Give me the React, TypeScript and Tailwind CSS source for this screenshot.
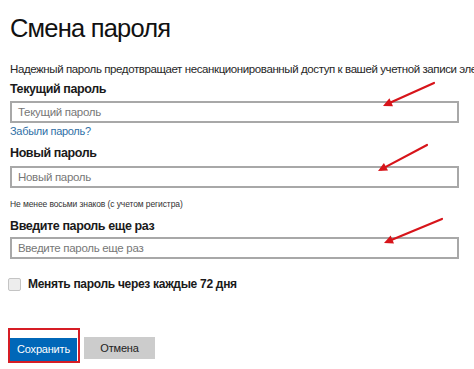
import React from 'react';

const font = { fontFamily: '"Liberation Sans", Arial, sans-serif' };

function Arrow({ x1, y1, x2, y2 }: { x1: number; y1: number; x2: number; y2: number }) {
  const ang = Math.atan2(y2 - y1, x2 - x1);
  const len = 10;
  const spread = 0.45;
  const ax = x2 - len * Math.cos(ang - spread);
  const ay = y2 - len * Math.sin(ang - spread);
  const bx = x2 - len * Math.cos(ang + spread);
  const by = y2 - len * Math.sin(ang + spread);
  return (
    <g>
      <line
        x1={x1}
        y1={y1}
        x2={x2 - 4 * Math.cos(ang)}
        y2={y2 - 4 * Math.sin(ang)}
        stroke="#d7141a"
        strokeWidth={2.2}
        strokeLinecap="round"
      />
      <polygon points={`${x2},${y2} ${ax},${ay} ${bx},${by}`} fill="#d7141a" />
    </g>
  );
}

const label = 'h-[16px] text-[12.5px] font-bold leading-[16px] tracking-[-0.4px] text-[#1a1a1a]';
const input =
  'h-[22px] w-[449px] border-2 border-[#a8a8a8] bg-white px-[6px] text-[11.5px] leading-[18px] tracking-[-0.3px] text-[#777]';

export default function App() {
  return (
    <div className="relative h-[369px] w-[474px] overflow-hidden bg-white" style={font}>
      <div className="px-[10px] pt-[11px]">
        <h1 className="h-[34px] text-[25.5px] font-normal leading-[34px] tracking-[-0.8px] text-[#111]">
          Смена пароля
        </h1>
        <p className="mt-[16px] h-[16px] whitespace-nowrap text-[11.5px] leading-[16px] tracking-[-0.4px] text-[#262626]">
          Надежный пароль предотвращает несанкционированный доступ к вашей учетной записи электронной почты.
        </p>

        <div className={`mt-[4px] ${label}`}>Текущий пароль</div>
        <div className={`mt-[4px] ${input}`}>Текущий пароль</div>
        <a className="block h-[16px] text-[11px] leading-[16px] tracking-[-0.3px] text-[#2f6fa6]">Забыли пароль?</a>

        <div className={`mt-[6px] ${label}`}>Новый пароль</div>
        <div className={`mt-[5px] ${input}`}>Новый пароль</div>
        <div className="mt-[10px] h-[12px] text-[8.5px] leading-[12px] tracking-[-0.1px] text-[#333]">
          Не менее восьми знаков (с учетом регистра)
        </div>

        <div className={`mt-[8px] ${label}`}>Введите пароль еще раз</div>
        <div className={`mt-[3px] ${input}`}>Введите пароль еще раз</div>

        <label className="mt-[17px] flex h-[16px] items-center gap-[7px]">
          <span className="-ml-[2px] block h-[13px] w-[13px] rounded-[2px] border border-[#c4c4c4] bg-[#ededed]" />
          <span className="text-[12px] font-bold leading-[16px] tracking-[-0.3px] text-[#1a1a1a]">
            Менять пароль через каждые 72 дня
          </span>
        </label>

        <div className="mt-[36px] flex items-start gap-[4px]">
          <div className="-ml-[2px] h-[35px] w-[72px] border-2 border-[#d61d25] pt-[8px]">
            <button className="block h-[23px] w-[67px] bg-[#0067b8] text-[11px] leading-[23px] tracking-[-0.2px] text-white">
              Сохранить
            </button>
          </div>
          <button className="mt-[9px] block h-[22px] w-[71px] bg-[#cccccc] text-[11px] leading-[22px] tracking-[-0.2px] text-[#222]">
            Отмена
          </button>
        </div>
      </div>
      <svg className="pointer-events-none absolute left-0 top-0" width={474} height={369}>
        <Arrow x1={434} y1={83} x2={383} y2={106} />
        <Arrow x1={427} y1={145} x2={378} y2={171} />
        <Arrow x1={442} y1={219} x2={384} y2={243} />
      </svg>
    </div>
  );
}
